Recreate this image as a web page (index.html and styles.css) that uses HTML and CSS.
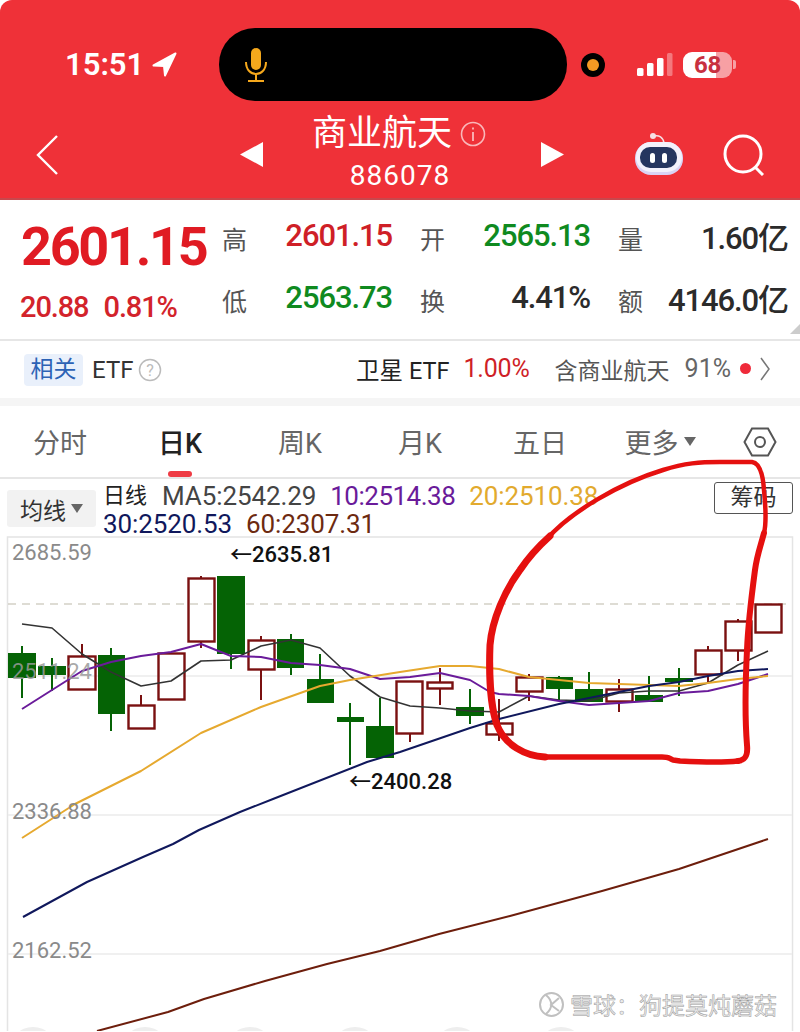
FILE: index.html
```html
<!DOCTYPE html>
<html lang="zh">
<head>
<meta charset="utf-8">
<title>商业航天 886078</title>
<link rel="stylesheet" href="styles.css">
</head>
<body>
<div class="page">
  <header class="head">
    <div class="status">
      <span class="time">15:51</span>
      <svg class="loc" viewBox="0 0 25 25"><path d="M23.5 1.5 L1.5 13.5 L12 14 L13 23.5 Z" fill="#fff" stroke="#fff" stroke-width="2" stroke-linejoin="round"/></svg>
      <div class="island">
        <svg class="mic" viewBox="0 0 24 34"><rect x="7" y="0" width="10" height="22" rx="5" fill="#f5a81c"/><path d="M2 14 C2 30 22 30 22 14 M12 27 V33 M4 33 H20" fill="none" stroke="#f5a81c" stroke-width="2"/></svg>
      </div>
      <span class="cam"><i></i></span>
      <svg class="signal" viewBox="0 0 36 24"><rect x="0" y="15" width="6.5" height="8" rx="1.5" fill="#fff"/><rect x="10" y="10" width="6.5" height="13" rx="1.5" fill="#fff"/><rect x="20" y="5" width="6.5" height="18" rx="1.5" fill="#fff"/><rect x="30" y="0" width="5.5" height="23" rx="1.5" fill="#fff" opacity=".35"/></svg>
      <span class="batt"><b>68</b></span>
      <span class="nub"></span>
    </div>
    <nav class="nav">
      <svg class="back" viewBox="0 0 24 42"><path d="M22 2 L3 21 L22 40" fill="none" stroke="#fff" stroke-width="2.4"/></svg>
      <svg class="tri" viewBox="0 0 23 25"><path d="M23 0 V25 L0 12.5 Z" fill="#fff"/></svg>
      <div class="title">
        <div class="name">商业航天<svg class="info" viewBox="0 0 26 26"><circle cx="13" cy="13" r="11.5" fill="none" stroke="#fff" stroke-opacity=".65" stroke-width="1.6"/><path d="M13 11 V20 M13 6.5 V8.5" stroke="#fff" stroke-opacity=".75" stroke-width="1.6"/></svg></div>
        <div class="code">886078</div>
      </div>
      <svg class="tri" viewBox="0 0 23 25"><path d="M0 0 V25 L23 12.5 Z" fill="#fff"/></svg>
      <div class="tools">
        <svg class="robot" viewBox="0 0 50 46">
          <path d="M19 4 C24 3 28 5 29 11" fill="none" stroke="#f6dfe4" stroke-width="1.6"/>
          <circle cx="18" cy="4" r="3" fill="#f6dfe4"/>
          <rect x="0" y="10" width="48" height="33" rx="16" fill="#d9d3f5"/>
          <rect x="1" y="10" width="46" height="30" rx="15" fill="#f3f1fb"/>
          <rect x="5" y="15" width="37" height="21" rx="10" fill="#25355f"/>
          <rect x="15" y="21" width="5" height="10" rx="2.5" fill="#fff"/><rect x="27" y="21" width="5" height="10" rx="2.5" fill="#fff"/>
        </svg>
        <svg class="search" viewBox="0 0 42 42"><circle cx="20" cy="20" r="18" fill="none" stroke="#fff" stroke-width="3"/><path d="M32 33 L40 41" stroke="#fff" stroke-width="3"/></svg>
      </div>
    </nav>
  </header>

  <section class="quote">
    <div class="main">
      <div class="last">2601.15</div>
      <div class="chg"><span>20.88</span><span>0.81%</span></div>
    </div>
    <div class="stats">
      <div class="cell"><span class="lab">高</span><span class="val up">2601.15</span></div>
      <div class="cell"><span class="lab">开</span><span class="val down">2565.13</span></div>
      <div class="cell"><span class="lab">量</span><span class="val">1.60亿</span></div>
      <div class="cell"><span class="lab">低</span><span class="val down">2563.73</span></div>
      <div class="cell"><span class="lab">换</span><span class="val">4.41%</span></div>
      <div class="cell"><span class="lab">额</span><span class="val">4146.0亿</span></div>
    </div>
    <span class="corner"></span>
  </section>

  <section class="etf">
    <span class="tag">相关</span>
    <span class="etf-name">ETF</span>
    <svg class="help" viewBox="0 0 24 24"><circle cx="12" cy="12" r="10.5" fill="none" stroke="#bbb" stroke-width="1.5"/><text x="12" y="17.5" class="help-q">?</text></svg>
    <span class="etf-right">
      <span class="sat">卫星 ETF</span>
      <span class="sat-pct">1.00%</span>
      <span class="has">含商业航天</span>
      <span class="has-pct">91%</span>
      <i class="dot"></i>
      <svg class="chev" viewBox="0 0 10 24"><path d="M1 1 L9 12 L1 23" fill="none" stroke="#777" stroke-width="1.5"/></svg>
    </span>
  </section>

  <div class="band"></div>

  <div class="tabs">
    <span class="tab">分时</span>
    <span class="tab on">日K</span>
    <span class="tab">周K</span>
    <span class="tab">月K</span>
    <span class="tab">五日</span>
    <span class="tab">更多<i class="caret"></i></span>
    <svg class="hex" viewBox="0 0 34 30"><path d="M9 1.5 H25 L32.5 15 L25 28.5 H9 L1.5 15 Z" fill="none" stroke="#555" stroke-width="2"/><circle cx="17" cy="15" r="5" fill="none" stroke="#555" stroke-width="2"/></svg>
  </div>

  <div class="legend">
    <div class="ma-btn">均线<i class="caret"></i></div>
    <div class="ma-list">
      <div class="ma-row"><span class="ma-day">日线</span><span class="c5">MA5:2542.29</span><span class="c10">10:2514.38</span><span class="c20">20:2510.38</span></div>
      <div class="ma-row"><span class="c30">30:2520.53</span><span class="c60">60:2307.31</span></div>
    </div>
    <div class="chips">筹码</div>
  </div>

  <svg class="chart" viewBox="0 537 800 495">
    <rect class="frame" x="7.5" y="538" width="785" height="500"/>
    <path class="grid" d="M8 677 H792 M8 816 H792 M8 955 H792"/>
    <path class="dash" d="M8 605 H792"/>

    <g class="g">
      <path d="M22 647 V699 M52 659 V692 M111 649 V732 M231 655 V670 M291 635 V676 M320 655 V704 M350 704 V766 M380 699 V759 M470 690 V725 M559 677 V701 M589 673 V702 M649 677 V702 M679 669 V697"/>
      <rect x="8.5" y="654.5" width="27" height="24"/><rect x="38.5" y="667.5" width="27" height="8"/><rect x="98.5" y="656.5" width="26" height="58"/><rect x="217.5" y="577.5" width="27" height="77"/><rect x="277.5" y="640.5" width="26" height="28"/><rect x="307.5" y="680.5" width="26" height="23"/><rect x="337.5" y="718.5" width="26" height="4"/><rect x="366.5" y="727.5" width="27" height="31"/><rect x="456.5" y="708.5" width="27" height="8"/><rect x="546.5" y="678.5" width="26" height="11"/><rect x="575.5" y="690.5" width="27" height="12"/><rect x="635.5" y="696.5" width="27" height="6"/><rect x="665.5" y="679.5" width="27" height="3"/>
    </g>
    <g class="r">
      <path d="M82 645 V657 M141 696 V706 M201 577 V579 M201 643 V649 M261 637 V641 M261 671 V701 M410 735 V743 M440 669 V683 M440 689 V706 M499 700 V724 M499 736 V742 M529 675 V678 M529 693 V702 M619 680 V690 M619 703 V713 M708 647 V651 M708 676 V683 M738 620 V622 M738 652 V662"/>
      <rect x="68.5" y="657.5" width="27" height="33"/><rect x="128.5" y="706.5" width="26" height="23"/><rect x="158.5" y="654.5" width="26" height="46"/><rect x="188.5" y="579.5" width="26" height="63"/><rect x="248.5" y="641.5" width="26" height="29"/><rect x="396.5" y="682.5" width="26" height="52"/><rect x="427.5" y="683.5" width="25" height="6"/><rect x="486.5" y="724.5" width="26" height="11"/><rect x="516.5" y="678.5" width="26" height="14"/><rect x="606.5" y="690.5" width="26" height="12"/><rect x="695.5" y="651.5" width="26" height="24"/><rect x="725.5" y="622.5" width="26" height="29"/><rect x="755.5" y="605.5" width="26" height="28"/>
    </g>

    <polyline class="l ma5" points="22,625 52,629 82,655 111,673 141,687 171,682 201,662 231,661 261,647 291,641 320,649 350,677 380,698 410,707 440,709 470,712 499,713 529,697 559,701 589,702 619,694 649,692 679,692 708,684 738,666 768,652"/>
    <polyline class="l ma10" points="22,710 52,691 82,672 111,663 141,657 171,653 201,645 231,657 261,658 291,664 320,666 350,670 380,680 410,678 440,674 470,681 490,693 499,695 529,697 559,702 589,706 619,704 649,702 679,694 708,692 738,685 768,675"/>
    <polyline class="l ma20" points="22,839 75,805 141,772 201,734 261,708 320,687 350,681 400,673 440,667 470,667 499,670 529,678 559,681 589,684 619,685 649,686 679,687 708,684 738,680 768,677"/>
    <polyline class="l ma30" points="23,918 87,883 143,858 173,845 199,831 240,813 273,800 367,763 400,753 470,729 499,720 559,705 619,693 649,687 679,683 708,677 738,672 768,670"/>
    <polyline class="l ma60" points="97,1032 168,1013 204,1000 265,982 327,965 380,952 439,935 510,917 602,892 679,870 768,840"/>

    <text class="axis" x="12" y="561">2685.59</text>
    <text class="axis faint" x="12" y="680">2511.24</text>
    <text class="axis" x="12" y="820">2336.88</text>
    <text class="axis" x="12" y="959">2162.52</text>
    <text class="mark" x="230" y="563">←2635.81</text>
    <text class="mark" x="349" y="790">←2400.28</text>

    <g class="nubs"><circle cx="33" cy="1052" r="24"/><circle cx="145" cy="1052" r="24"/><circle cx="250" cy="1052" r="24"/><circle cx="355" cy="1052" r="24"/><circle cx="457" cy="1052" r="24"/><circle cx="561" cy="1052" r="24"/></g>

    <g class="wm-logo"><circle cx="551.5" cy="1005.5" r="11.5"/><path d="M546 996 C553 1002 553 1009 546 1015 M559 999 L551 1006 L559 1012"/></g>
    <text class="wm" x="570" y="1015">雪球：狗提莫炖蘑菇</text>
  </svg>

  <svg class="scribble" viewBox="0 0 800 1032">
    <path class="thin" d="M546 540 C570 512 620 483 663 470 C685 463 700 462 720 462 L752 462 C760 463 763 475 764 490 C766 510 766 525 764 533"/>
    <path class="mid" d="M764 533 C760 548 757 555 755 570 C751 600 748 625 747 650 C745 690 745 720 747 745 C748 755 746 760 738 761"/>
    <path class="low" d="M738 761 C720 763 700 762 680 761 L673 760 C668 758 670 757 662 757 L545 757"/>
    <path class="thick" d="M545 757 C525 756 505 745 497 725 C490 705 489 670 490 645 C492 620 505 590 520 570 C530 555 540 545 550 536"/>
  </svg>
</div>
</body>
</html>
```

FILE: styles.css
```css
* { box-sizing: border-box; }
html, body { margin: 0; padding: 0; background: #fff; }
body { font-family: Roboto, "Noto Sans CJK SC", sans-serif; color: #222; }
.page { position: relative; width: 800px; height: 1032px; overflow: hidden; }
i { display: block; font-style: normal; }

/* header */
.head { height: 200px; background: #ef3138; border-radius: 12px 12px 0 0; border-bottom: 2px solid #c9474c; color: #fff; }
.status { display: flex; align-items: center; height: 101px; padding: 28px 0 0 65px; }
.time { width: 78px; font-size: 31px; font-weight: 600; letter-spacing: 0; }
.loc { width: 25px; height: 25px; margin-left: 9px; }
.island { display: flex; align-items: center; width: 348px; height: 73px; margin-left: 42px; padding-left: 25px; background: #000; border-radius: 36px; }
.mic { width: 24px; height: 34px; }
.cam { display: flex; align-items: center; justify-content: center; width: 24px; height: 24px; margin-left: 14px; background: #000; border-radius: 50%; }
.cam i { width: 12px; height: 12px; background: #f59a23; border-radius: 50%; }
.signal { width: 36px; height: 24px; margin-left: 32px; }
.batt { display: flex; align-items: center; justify-content: center; width: 49px; height: 26px; margin-left: 10px; background: linear-gradient(90deg, #fff 0 67%, #f7a0a4 67%); border-radius: 9px; }
.batt b { font-size: 24px; font-weight: 700; letter-spacing: -.3px; color: #c8303f; }
.nub { width: 3px; height: 9px; margin-left: 1px; background: #f7a0a4; border-radius: 0 2px 2px 0; }

.nav { display: grid; grid-template-columns: 240px 23px 278px 23px 1fr; align-items: center; height: 97px; }
.back { width: 24px; height: 42px; margin-left: 35px; margin-top: 10px; }
.tri { width: 23px; height: 25px; margin-top: 10px; }
.title { padding-top: 7px; text-align: center; }
.name { display: flex; align-items: center; justify-content: center; gap: 8px; font-size: 35px; line-height: 44px; padding-right: 6px; }
.info { width: 26px; height: 26px; }
.code { margin-top: 2px; margin-right: 4px; font-size: 28px; line-height: 36px; letter-spacing: 1px; }
.tools { display: flex; align-items: center; margin-top: 6px; margin-left: 71px; gap: 38px; }
.robot { width: 50px; height: 46px; margin-top: 4px; }
.search { width: 42px; height: 42px; margin-top: 4px; }

/* quote */
.quote { position: relative; display: flex; height: 141px; padding-left: 21px; border-bottom: 2px solid #e6e6e6; }
.main { width: 201px; padding-top: 16px; }
.last { font-size: 54px; font-weight: 700; line-height: 62px; letter-spacing: -2.3px; color: #e01b23; }
.chg { display: flex; gap: 15px; margin-top: 11px; margin-left: -1px; font-size: 29px; line-height: 36px; font-weight: 500; letter-spacing: -1.1px; color: #d3232b; }
.stats { display: grid; grid-template-columns: repeat(3, 170px); column-gap: 28px; row-gap: 26px; padding-top: 20px; align-content: start; }
.cell { display: flex; justify-content: space-between; align-items: center; height: 36px; }
.lab { font-size: 25px; color: #555; }
.val { margin-bottom: 5px; font-size: 31px; font-weight: 500; letter-spacing: -1.1px; color: #2b2b2b; }
.up { color: #cf1f27; }
.down { color: #0f8a1f; }
.corner { position: absolute; right: 0; bottom: 5px; border-style: solid; border-width: 0 0 10px 10px; border-color: transparent transparent #ccc transparent; }

/* etf */
.etf { display: flex; align-items: center; height: 57px; padding-left: 24px; }
.tag { width: 59px; height: 32px; line-height: 32px; text-align: center; font-size: 23px; color: #2c62b5; background: #e9f0fb; border-radius: 4px; }
.etf-name { margin-left: 9px; font-size: 24px; color: #333; }
.help { width: 24px; height: 24px; margin-left: 5px; }
.help-q { font-size: 16px; fill: #bbb; text-anchor: middle; }
.etf-right { display: flex; align-items: center; margin-left: auto; margin-top: -2px; padding-right: 30px; font-size: 25px; }
.sat { font-size: 23.5px; color: #222; }
.sat-pct { margin-left: 14px; color: #cf1f27; letter-spacing: -.2px; }
.has { margin-left: 25px; font-size: 23px; color: #555; }
.has-pct { margin-left: 15px; color: #666; }
.dot { width: 11px; height: 11px; margin-left: 9px; background: #ef2a3a; border-radius: 50%; }
.chev { width: 10px; height: 24px; margin-left: 9px; }
.band { height: 8px; background: #f5f5f5; }

/* tabs */
.tabs { display: flex; align-items: center; height: 73px; border-bottom: 2px solid #e6e6e6; }
.tab { position: relative; display: flex; align-items: center; justify-content: center; width: 120px; height: 71px; font-size: 27px; color: #666; }
.tab.on { color: #222; font-weight: 500; }
.tab.on::after { content: ""; position: absolute; left: 48px; bottom: 0; width: 24px; height: 6px; background: #ef3b44; border-radius: 3px; }
.caret { width: 0; height: 0; margin-left: 5px; border-style: solid; border-width: 9px 6px 0; border-color: #666 transparent transparent; }
.hex { width: 34px; height: 30px; margin-left: 23px; }

/* legend */
.legend { position: relative; display: flex; height: 57px; padding: 3px 0 0 7px; font-size: 26px; letter-spacing: -.1px; }
.ma-btn { display: flex; align-items: center; justify-content: center; width: 89px; height: 37px; margin-top: 8px; font-size: 23px; letter-spacing: 0; color: #333; background: #f2f2f2; border-radius: 3px; }
.ma-list { margin-left: 7px; }
.ma-row { display: flex; gap: 14px; height: 28px; line-height: 28px; white-space: nowrap; }
.ma-day { margin-right: 1px; font-size: 22px; letter-spacing: 0; color: #222; }
.c5 { color: #444; }
.c10 { letter-spacing: -.5px; color: #6a1b9a; }
.c20 { color: #e2aa2e; }
.c30 { color: #10185c; }
.c60 { color: #6d2a10; }
.chips { position: absolute; top: 3px; right: 7px; width: 79px; height: 32px; line-height: 29px; text-align: center; font-size: 23px; letter-spacing: 0; color: #333; border: 1px solid #555; border-radius: 3px; }

/* chart */
.chart { display: block; width: 800px; height: 495px; }
.frame { fill: none; stroke: #e4e4e4; stroke-width: 1.5; }
.grid { fill: none; stroke: #ececec; stroke-width: 1.5; }
.dash { fill: none; stroke: #bdb9aa; stroke-width: 1.2; stroke-dasharray: 8 6; }
.g path { stroke: #056305; stroke-width: 2; fill: none; }
.g rect { fill: #056305; stroke: #056305; }
.r path { stroke: #7a1010; stroke-width: 2; fill: none; }
.r rect { fill: none; stroke: #7a1010; stroke-width: 2.4; }
.l { fill: none; stroke-width: 1.6; stroke-linejoin: round; }
.ma5 { stroke: #333; }
.ma10 { stroke: #6a1b9a; stroke-width: 2; }
.ma20 { stroke: #e6a92f; stroke-width: 2; }
.ma30 { stroke: #10185c; stroke-width: 2; }
.ma60 { stroke: #6d1e0c; stroke-width: 2; }
.axis { font-size: 22px; fill: #8a8a8a; }
.faint { fill: #9a9a9a; fill-opacity: .85; }
.mark { font-size: 22px; fill: #111; font-weight: 500; }
.nubs circle { fill: #eee; }
.wm { font-size: 23px; fill: #ececec; stroke: #999; stroke-width: .5; }
.wm-logo circle, .wm-logo path { fill: none; stroke: #c0c0c0; stroke-width: 2; }

/* hand-drawn mark */
.scribble { position: absolute; inset: 0; width: 800px; height: 1032px; pointer-events: none; }
.scribble path { fill: none; stroke: #e5100f; stroke-linejoin: round; stroke-linecap: round; }
.scribble .thin { stroke-width: 4.5; }
.scribble .mid { stroke-width: 6; }
.scribble .low { stroke-width: 5.5; }
.scribble .thick { stroke-width: 7; }
```
